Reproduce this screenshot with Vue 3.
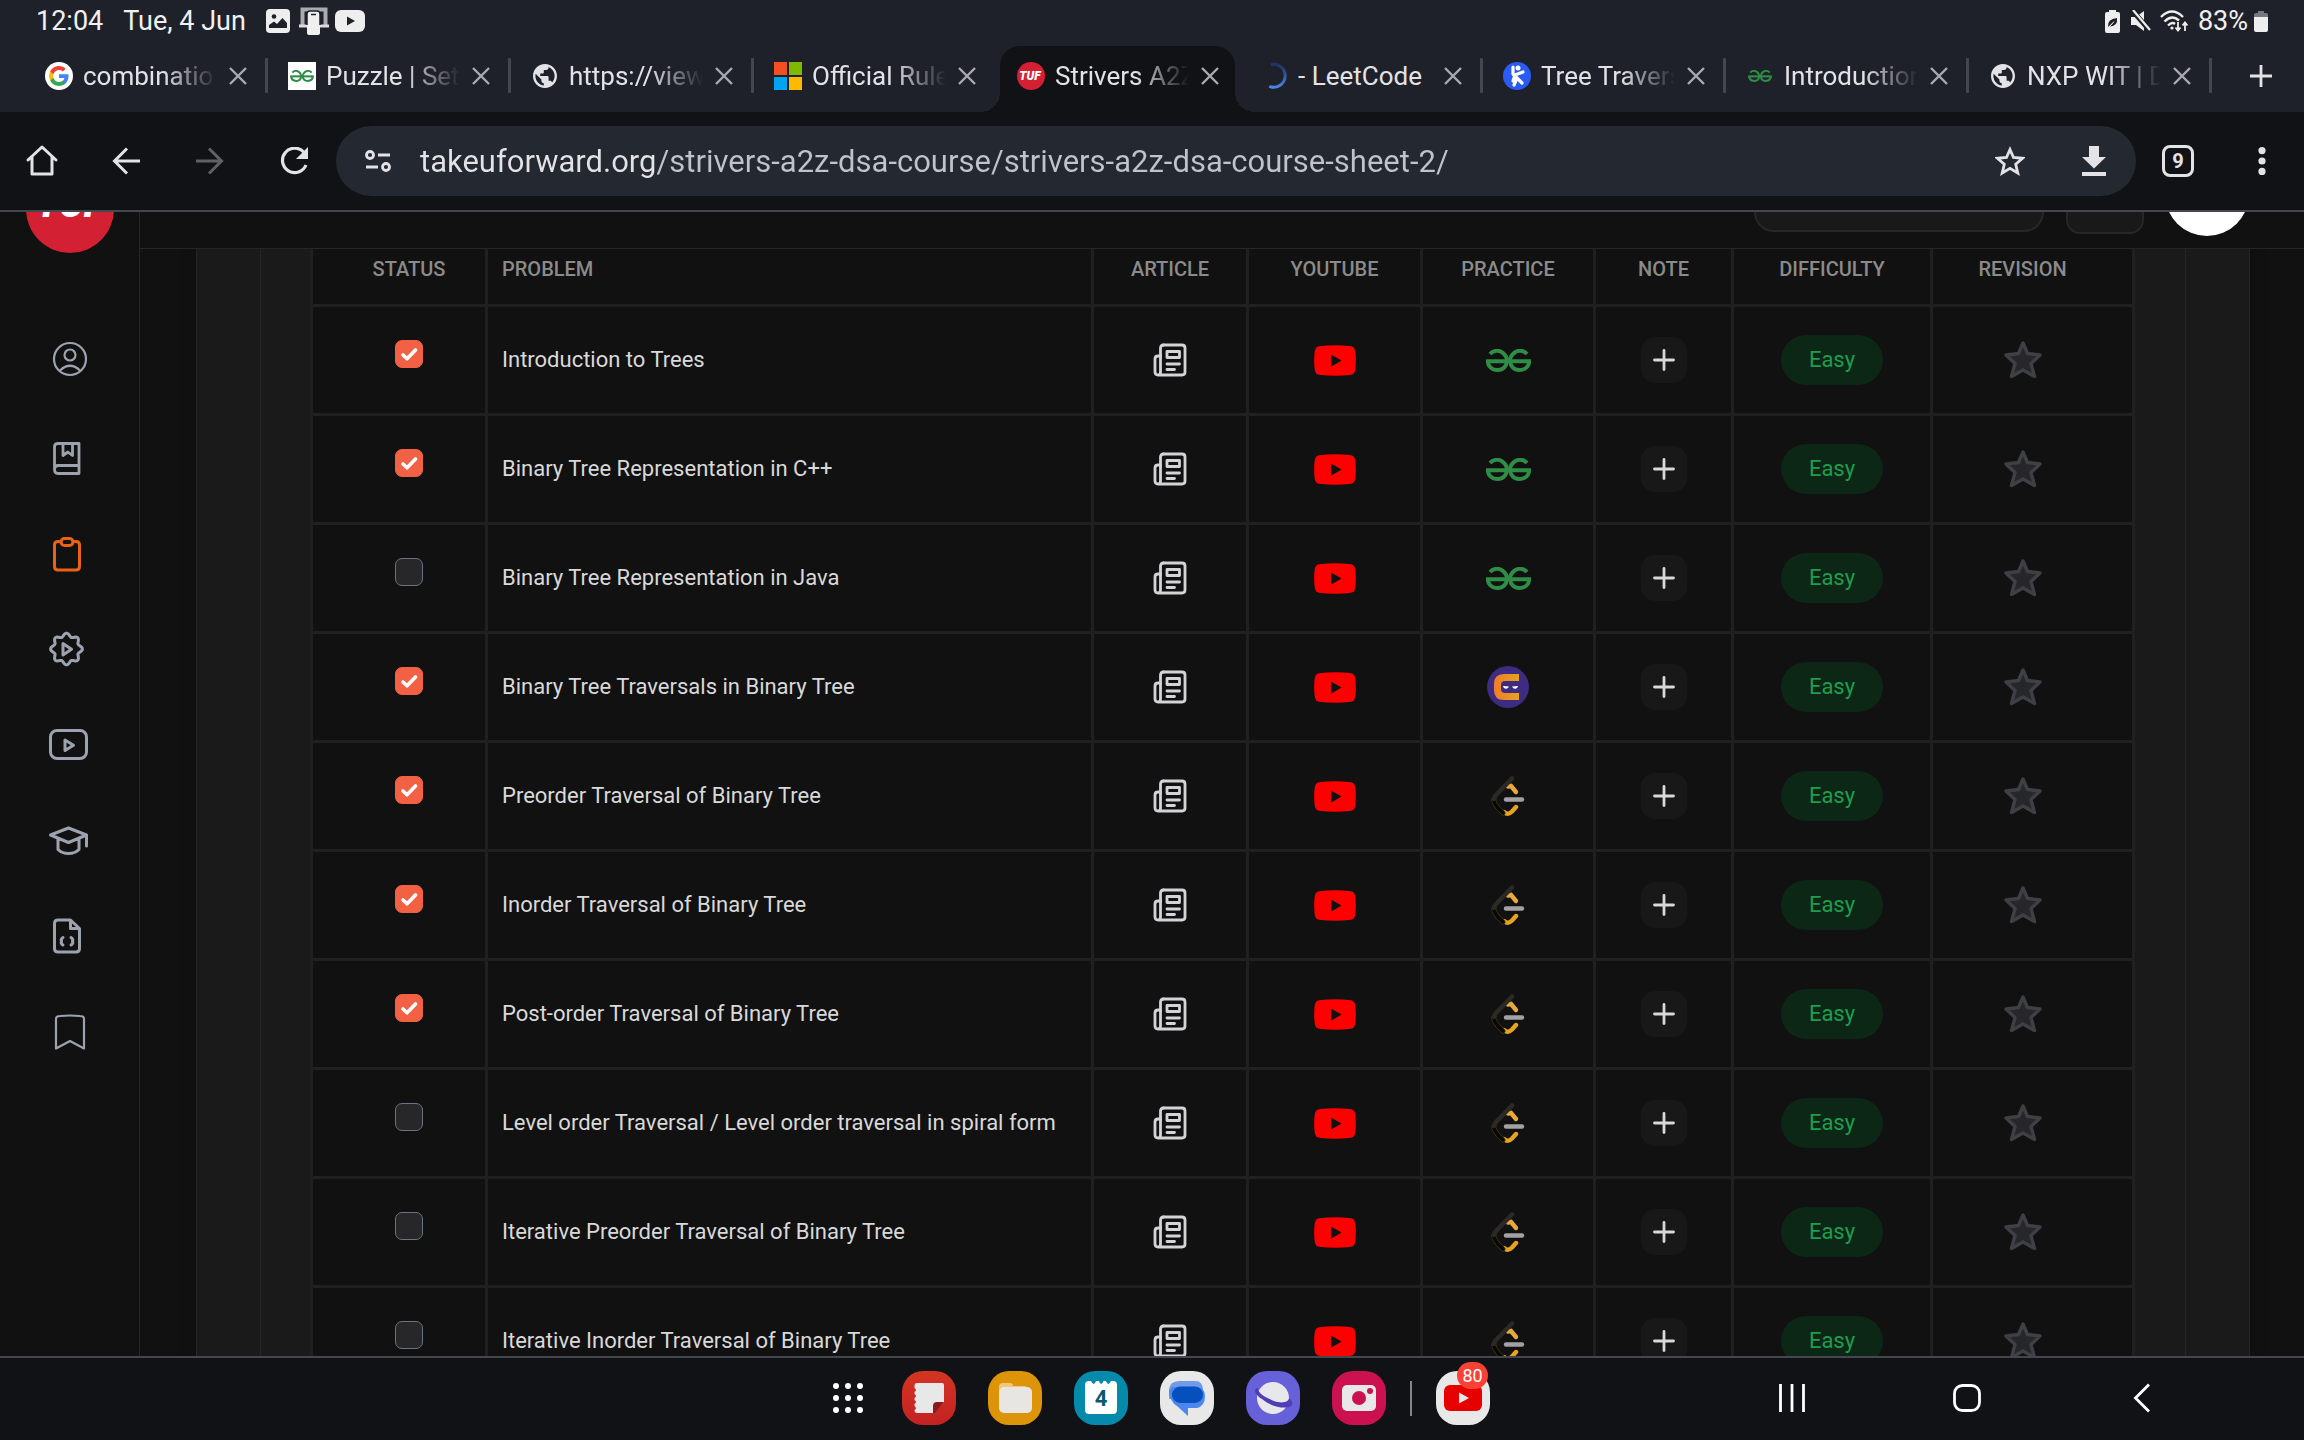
<script setup>
import { ref } from 'vue'

const tabs = [
  { icon: 'google', title: 'combinatio', fade: true, divided: true },
  { icon: 'gfg-box', title: 'Puzzle | Set', fade: true, divided: true },
  { icon: 'globe', title: 'https://view', fade: true, divided: true },
  { icon: 'windows', title: 'Official Rule', fade: true },
  { icon: 'tuf', title: 'Strivers A2Z', fade: true, active: true },
  { icon: 'spinner', title: '- LeetCode', divided: true },
  { icon: 'runner', title: 'Tree Travers', fade: true, divided: true },
  { icon: 'gfg', title: 'Introduction', fade: true, divided: true },
  { icon: 'globe', title: 'NXP WIT | D', fade: true, divided: true }
]

const url = ref('takeuforward.org/strivers-a2z-dsa-course/strivers-a2z-dsa-course-sheet-2/')

const side = [
  { icon: 'user', label: 'Profile' },
  { icon: 'book', label: 'Blogs' },
  { icon: 'clipboard', label: 'Sheets', active: true },
  { icon: 'badge', label: 'Playlists' },
  { icon: 'video', label: 'Videos' },
  { icon: 'cap', label: 'Courses' },
  { icon: 'code', label: 'Core subjects' },
  { icon: 'mark', label: 'Bookmarks' }
]

const columns = [
  { name: 'Status', width: 175 },
  { name: 'Problem', width: 606 },
  { name: 'Article', width: 155 },
  { name: 'YouTube', width: 174 },
  { name: 'Practice', width: 173 },
  { name: 'Note', width: 138 },
  { name: 'Difficulty', width: 199 },
  { name: 'Revision', width: 202 }
]

const problems = ref([
  { title: 'Introduction to Trees', done: true, practice: 'gfg' },
  { title: 'Binary Tree Representation in C++', done: true, practice: 'gfg' },
  { title: 'Binary Tree Representation in Java', done: false, practice: 'gfg' },
  { title: 'Binary Tree Traversals in Binary Tree', done: true, practice: 'ninja' },
  { title: 'Preorder Traversal of Binary Tree', done: true, practice: 'leetcode' },
  { title: 'Inorder Traversal of Binary Tree', done: true, practice: 'leetcode' },
  { title: 'Post-order Traversal of Binary Tree', done: true, practice: 'leetcode' },
  { title: 'Level order Traversal / Level order traversal in spiral form', done: false, practice: 'leetcode' },
  { title: 'Iterative Preorder Traversal of Binary Tree', done: false, practice: 'leetcode' },
  { title: 'Iterative Inorder Traversal of Binary Tree', done: false, practice: 'leetcode' }
])

// Scalloped outline of the playlist badge: a circle with eight soft lobes.
const badgePath = Array.from({ length: 96 }, (_, i) => {
  const a = (i / 96) * Math.PI * 2
  const r = 14.2 + 1.7 * Math.cos(8 * a)
  return `${i ? 'L' : 'M'}${(20.5 + r * Math.cos(a)).toFixed(2)} ${(24 + r * Math.sin(a)).toFixed(2)}`
}).join('') + 'Z'
</script>

<template>
  <div class="device">
    <svg class="defs" aria-hidden="true">
      <symbol id="gfg" viewBox="0 0 45 23">
        <g fill="none" stroke="#2f8d46" stroke-width="4">
          <path d="M0 12.2H45" />
          <path d="M41 5C37.5 1 32 1 28.5 3.6C25.5 6 23.8 9 24 12C24.6 17.5 28 21 33.2 21C39 21 43 17.5 43 12.2" />
          <path d="M4 5C7.5 1 13 1 16.5 3.6C19.5 6 21.2 9 21 12C20.4 17.5 17 21 11.8 21C6 21 2 17.5 2 12.2" />
        </g>
      </symbol>
      <symbol id="ninja" viewBox="0 0 42 42">
        <linearGradient id="ninja-fill"><stop offset="0" stop-color="#f07c2c" /><stop offset="1" stop-color="#e8a21f" /></linearGradient>
        <circle cx="21" cy="21" r="21" fill="#3e2b82" />
        <path d="M32 8V15H18Q14 15 14 19V23Q14 27 18 27H32V34H17Q7 34 7 24V18Q7 8 17 8Z" fill="url(#ninja-fill)" />
        <path d="M16 20L22 20.6Q21 23 18.5 22.8Q16.5 22.5 16 20ZM31 20L25 20.6Q26 23 28.5 22.8Q30.5 22.5 31 20Z" fill="#fff" />
      </symbol>
      <symbol id="leetcode" viewBox="0 0 34 40">
        <g fill="none" stroke-linecap="round">
          <path d="M17 10.5L20 10L25 16" stroke="#e7a93c" stroke-width="4.4" />
          <path d="M13 36C17 39.5 19.5 37 21 35.5L25 31" stroke="#e7a41f" stroke-width="4.4" />
          <path d="M3 23C2 27 5 29 7 32L12 37" stroke="#4a3712" stroke-width="5" />
          <path d="M3 23C2 27 5 29 7 32L12 37" stroke="#070707" stroke-width="3.6" />
          <path d="M21 2.5L5 19C3.5 20.5 3 22 3 23" stroke="#2b2a25" stroke-width="4.6" />
          <path d="M15 23.5H31" stroke="#a3a1a3" stroke-width="4.4" />
        </g>
      </symbol>
      <symbol id="article" viewBox="0 0 34 34">
        <g fill="none" stroke="#d4d4d8" stroke-width="2.8" stroke-linecap="round" stroke-linejoin="round">
          <path d="M10.5 2H29Q32 2 32 5V29Q32 32 29 32H5Q2 32 2 29V16Q2 13 5 13H7.5V29Q7.5 32 5 32" />
          <path d="M7.5 14V5Q7.5 2 10.5 2" />
          <path d="M14 8.5H26.500V14.5H14ZM14 21H26.5M14 26.5H21.5" />
        </g>
      </symbol>
      <symbol id="youtube" viewBox="0 0 42 31">
        <path d="M5 1.3Q21-.6 37 1.3Q40.5 2 41.2 6Q42.5 15.5 41.2 25Q40.5 29 37 29.7Q21 31.6 5 29.7Q1.5 29 .8 25Q-.5 15.5 .8 6Q1.5 2 5 1.3Z" fill="#f00" />
        <path d="M17 9.5V21.7L27.5 15.6Z" fill="#111" />
      </symbol>
      <symbol id="globe" viewBox="2 2 20 20">
        <path fill="#e3e2e6" d="M12 2C6.48 2 2 6.48 2 12s4.48 10 10 10 10-4.48 10-10S17.52 2 12 2zm-1 17.93c-3.95-.49-7-3.85-7-7.93 0-.62.08-1.21.21-1.79L9 15v1c0 1.1.9 2 2 2v1.93zm6.9-2.54c-.26-.81-1-1.39-1.9-1.39h-1v-3c0-.55-.45-1-1-1H8v-2h2c.55 0 1-.45 1-1V7h2c1.1 0 2-.9 2-2v-.41c2.93 1.19 5 4.06 5 7.41 0 2.08-.8 3.97-2.1 5.39z" />
      </symbol>
      <symbol id="google" viewBox="0 0 28 28">
        <circle cx="14" cy="14" r="14" fill="#fff" />
        <g transform="translate(3.2 3.2) scale(.9)">
          <path fill="#4285f4" d="M22.56 12.25c0-.78-.07-1.53-.2-2.25H12v4.26h5.92c-.26 1.37-1.04 2.53-2.21 3.31v2.77h3.57c2.08-1.92 3.28-4.74 3.28-8.09z" />
          <path fill="#34a853" d="M12 23c2.97 0 5.46-.98 7.28-2.66l-3.57-2.77c-.98.66-2.23 1.06-3.71 1.06-2.86 0-5.29-1.93-6.16-4.53H2.18v2.84C3.99 20.53 7.7 23 12 23z" />
          <path fill="#fbbc05" d="M5.84 14.09c-.22-.66-.35-1.36-.35-2.09s.13-1.43.35-2.09V7.07H2.18C1.43 8.55 1 10.22 1 12s.43 3.45 1.18 4.93l2.85-2.22.81-.62z" />
          <path fill="#ea4335" d="M12 5.38c1.62 0 3.06.56 4.21 1.64l3.15-3.15C17.45 2.09 14.97 1 12 1 7.7 1 3.99 3.47 2.18 7.07l3.66 2.84c.87-2.6 3.3-4.53 6.16-4.53z" />
        </g>
      </symbol>
      <symbol id="gfg-box" viewBox="0 0 28 28">
        <path d="M0 0H28V28H0Z" fill="#fff" />
        <use href="#gfg" x="2" y="8" width="24" height="12" />
      </symbol>
      <symbol id="windows" viewBox="0 0 28 28">
        <path d="M0 0H13V13H0Z" fill="#f25022" /><path d="M15 0H28V13H15Z" fill="#7fba00" />
        <path d="M0 15H13V28H0Z" fill="#00a4ef" /><path d="M15 15H28V28H15Z" fill="#ffb900" />
      </symbol>
      <symbol id="spinner" viewBox="0 0 28 28">
        <linearGradient id="spin-fill" x2="0" y2="1"><stop offset="0" stop-color="#1d3361" /><stop offset="1" stop-color="#4a86e8" /></linearGradient>
        <path d="M10 2.8A11.5 11.5 0 1 1 10 24.6" transform="rotate(4 14 14)" fill="none" stroke="url(#spin-fill)" stroke-width="3" />
      </symbol>
      <symbol id="runner" viewBox="0 0 28 28">
        <circle cx="14" cy="14" r="14" fill="#2a5cf5" />
        <circle cx="15" cy="6" r="2.5" fill="#fff" />
        <path d="M10 5V12L14 16L11 23M20 10L12 13L10 19M14 16L19 21" fill="none" stroke="#fff" stroke-width="3.2" stroke-linecap="round" stroke-linejoin="round" />
      </symbol>
    </svg>

    <header class="status">
      <span>12:04</span>
      <span class="date">Tue, 4 Jun</span>
      <svg width="24" height="24" viewBox="0 0 24 24"><rect width="24" height="24" rx="4" fill="#eee" /><circle cx="8" cy="7.5" r="2.3" fill="#1f212a" /><path d="M3 19V16L8 12.5L11 15L16.5 9L21 14V19Z" fill="#1f212a" /></svg>
      <svg class="laptop" width="30" height="28" viewBox="0 0 30 28"><path d="M3.5 18V2.5H26.5V18" fill="none" stroke="#aaabae" stroke-width="4" /><path d="M0 19H30" stroke="#ddd" stroke-width="3" /><rect x="8" y="4" width="13" height="24" rx="2" fill="#f0f0f0" /><path d="M8 18V7Q8 4 11 4H18Q21 4 21 7V18" fill="none" stroke="#1f212a" stroke-width="1.5" /><path d="M12 7.5H17" stroke="#1f212a" stroke-width="1.5" /></svg>
      <svg width="30" height="22" viewBox="0 0 30 22"><rect width="30" height="22" rx="6" fill="#eee" /><path d="M12 6.5V15.5L20 11Z" fill="#1f212a" /></svg>
      <div class="status-right">
        <svg width="15" height="23" viewBox="0 0 15 23"><path d="M4 0H11V2H13Q15 2 15 4V21Q15 23 13 23H2Q0 23 0 21V4Q0 2 2 2H4Z" fill="#eee" /><path d="M3 17Q2 9 12 8Q13 16 5 16.5L9 12" fill="#1f212a" /><path d="M3 18L9 11.5" stroke="#eee" stroke-width="1" /></svg>
        <svg class="mute" width="20" height="22" viewBox="0 0 20 22"><path d="M0 7H5L13 1V21L5 15H0Z" fill="#eee" /><path d="M1 0L19 21" stroke="#1f212a" stroke-width="5" /><path d="M2 0L19 20" stroke="#eee" stroke-width="2.2" /></svg>
        <svg class="wifi" width="28" height="22" viewBox="0 0 28 22"><g fill="none" stroke="#eee" stroke-width="2.4"><path d="M1 7Q12-4 23 7M4.5 11.5Q12 4 19 10.5M8 15.5Q12 11.5 15 14" /><path d="M18 12V20M15.5 17.5L18 20.5L20.5 17.5M25 21V13M22.5 15.5L25 12.5L27.5 15.5" stroke-width="1.8" /></g><circle cx="12" cy="18" r="1.6" fill="#eee" /></svg>
        <span>83%</span>
        <svg class="battery" width="14" height="21" viewBox="0 0 14 21"><path d="M4 0H10V2H12Q14 2 14 4V7H0V4Q0 2 2 2H4Z" fill="#77797f" /><path d="M0 6H14V19Q14 21 12 21H2Q0 21 0 19Z" fill="#eee" /></svg>
      </div>
    </header>

    <nav class="tabs" aria-label="Open tabs">
      <div v-for="tab in tabs" :key="tab.title" class="tab" :class="{ active: tab.active, divided: tab.divided }">
        <button class="tab-main" type="button">
          <svg v-if="tab.icon === 'tuf'" width="28" height="28" viewBox="0 0 28 28"><circle cx="14" cy="14" r="14" fill="#d32032" /><text x="13" y="18" text-anchor="middle" class="tuf-small">TUF</text></svg>
          <svg v-else-if="tab.icon === 'gfg'" width="28" height="28" viewBox="0 0 28 28"><use href="#gfg" x="2" y="8" width="24" height="12" /></svg>
          <svg v-else-if="tab.icon === 'globe'" width="28" height="28" viewBox="-2 -2 28 28"><use href="#globe" width="24" height="24" /></svg>
          <svg v-else width="28" height="28"><use :href="'#' + tab.icon" width="28" height="28" /></svg>
          <span class="tab-title" :class="{ fade: tab.fade }">{{ tab.title }}</span>
        </button>
        <button class="tab-close" type="button" aria-label="Close tab">
          <svg width="18" height="18" viewBox="0 0 18 18"><path d="M1 1L17 17M17 1L1 17" stroke="#a9aab0" stroke-width="2.4" /></svg>
        </button>
      </div>
      <button class="new-tab" type="button" aria-label="New tab">
        <svg width="24" height="24" viewBox="0 0 24 24"><path d="M12 1V23M1 12H23" stroke="#e3e2e6" stroke-width="2.8" /></svg>
      </button>
    </nav>

    <div class="toolbar">
      <button type="button" aria-label="Home"><svg width="34" height="34" viewBox="0 0 34 34"><path d="M3 16L17 3L31 16M7 13V30H27V13" fill="none" stroke="#e3e2e6" stroke-width="3" stroke-linejoin="round" stroke-linecap="round" /></svg></button>
      <button type="button" aria-label="Back"><svg width="28" height="28" viewBox="0 0 28 28"><path d="M15 1.5L2.5 14L15 26.5M3 14H28" fill="none" stroke="#e3e2e6" stroke-width="3" /></svg></button>
      <button type="button" aria-label="Forward"><svg width="28" height="28" viewBox="0 0 28 28"><path d="M13 1.5L25.5 14L13 26.5M25 14H0" fill="none" stroke="#606165" stroke-width="3" /></svg></button>
      <button type="button" aria-label="Reload"><svg width="28" height="28" viewBox="0 0 28 28"><path d="M24 5.5A12.2 12.2 0 1 0 26 18" fill="none" stroke="#e3e2e6" stroke-width="3.2" /><path d="M28 0V12H16Z" fill="#e3e2e6" /></svg></button>
      <form class="omnibox" @submit.prevent>
        <button type="button" aria-label="Site settings"><svg width="26" height="22" viewBox="0 0 26 22"><g fill="none" stroke="#e3e2e6" stroke-width="2.8"><circle cx="5" cy="5" r="3.5" /><path d="M13 5H25M1 17H13" /><circle cx="21" cy="17" r="3.5" /></g></svg></button>
        <input v-model="url" type="text" aria-label="Address" />
        <button type="button" aria-label="Bookmark this page"><svg width="30" height="30" viewBox="0 0 30 30"><path d="M15 3.5L18.500 11.5L27.5 12.3L20.7 18.2L22.8 27L15 22.3L7.2 27L9.3 18.2L2.5 12.3L11.5 11.5Z" fill="none" stroke="#e3e2e6" stroke-width="2.8" /></svg></button>
        <button type="button" aria-label="Download page"><svg width="26" height="30" viewBox="0 0 26 30"><path d="M8 0H18V11H25L13 22.5L1 11H8ZM1 26H25V30H1Z" fill="#e3e2e6" /></svg></button>
      </form>
      <button type="button" class="count" aria-label="Switch tabs"><span>9</span></button>
      <button type="button" aria-label="Menu"><svg width="8" height="28" viewBox="0 0 8 28"><circle cx="4" cy="3.6" r="3.6" fill="#e3e2e6" /><circle cx="4" cy="14" r="3.6" fill="#e3e2e6" /><circle cx="4" cy="24.4" r="3.6" fill="#e3e2e6" /></svg></button>
    </div>

    <div class="page">
      <aside class="sidebar">
        <a class="logo" href="#" aria-label="Home page">TUF</a>
        <nav class="side-nav">
          <a v-for="s in side" :key="s.icon" href="#" :aria-label="s.label" :class="{ active: s.active }">
            <svg width="48" height="48" viewBox="0 0 48 48" fill="none" stroke="currentColor" stroke-width="3" stroke-linecap="round" stroke-linejoin="round">
              <g v-if="s.icon === 'user'" stroke-width="2.2"><circle cx="24" cy="24" r="16" /><circle cx="24" cy="20" r="5.5" /><path d="M14 35.5Q24 26 34 35.5" /></g>
              <g v-else-if="s.icon === 'book'" stroke-width="2.8"><path d="M8.5 34.5V12Q8.5 8.500 12 8.5H33V38.5H12Q8.5 38.5 8.5 34.5Q8.5 30.5 12 30.5H32" /><path d="M17 9V20.5L21.8 17L26.5 20.5V9" /></g>
              <g v-else-if="s.icon === 'clipboard'"><path d="M15 11.5H12Q8.5 11.5 8.5 15V36.5Q8.5 40 12 40H30Q33.5 40 33.5 36.5V15Q33.5 11.5 30 11.5H27" /><rect x="15" y="8.5" width="12" height="7" rx="3.5" /></g>
              <g v-else-if="s.icon === 'badge'"><path :d="badgePath" /><path d="M17 18.5V30L25.5 24.2Z" /></g>
              <g v-else-if="s.icon === 'video'"><rect x="4.5" y="10.5" width="36" height="28" rx="6.5" /><path d="M19 20V30.5L27.5 25.2Z" /></g>
              <g v-else-if="s.icon === 'cap'"><path d="M4.5 20L22.5 13L40.5 20L22.5 27.5ZM40.5 20V31M12 24V34.5Q16 38.5 22.5 38.5Q29 38.5 33 34.5V24" /></g>
              <g v-else-if="s.icon === 'code'"><path d="M24.5 10H12Q8.5 10 8.5 13.5V38.5Q8.5 42 12 42H30Q33.5 42 33.5 38.5V18.5ZM24.5 10V18.5H33.5" /><path d="M17 27.5Q14.5 29 15.5 31.3Q14.5 33.5 17 35M25 27.5Q27.5 29 26.5 31.3Q27.5 33.5 25 35" /></g>
              <g v-else stroke-width="2.2"><path d="M10 43.5V14Q10 11 14 11Q24 10 34 11Q38 11 38 14V43.5L24 36Z" /></g>
            </svg>
          </a>
        </nav>
      </aside>

      <div class="main">
        <div class="site-bar">
          <button class="search" type="button" aria-label="Search"></button>
          <button class="theme" type="button" aria-label="Theme"></button>
          <button class="avatar" type="button" aria-label="Account"></button>
        </div>
        <main class="scroll">
          <section class="outer">
            <div class="inner">
              <table>
                <colgroup><col v-for="c in columns" :key="c.name" :style="{ width: c.width + 'px' }" /></colgroup>
                <thead>
                  <tr><th v-for="c in columns" :key="c.name" :class="'c-' + c.name.toLowerCase()" scope="col">{{ c.name }}</th></tr>
                </thead>
                <tbody>
                  <tr v-for="(p, i) in problems" :key="p.title">
                    <td class="c-status"><span class="check"><input :id="'p' + i" v-model="p.done" type="checkbox" /><svg v-if="p.done" width="28" height="28" viewBox="0 0 28 28"><path d="M8 15L12 18.8L20.5 10" fill="none" stroke="#fff" stroke-width="3.6" stroke-linecap="round" stroke-linejoin="round" /></svg></span></td>
                    <td class="c-problem"><label :for="'p' + i">{{ p.title }}</label></td>
                    <td><a href="#" aria-label="Article"><svg width="34" height="34"><use href="#article" /></svg></a></td>
                    <td><a href="#" aria-label="YouTube video"><svg width="42" height="31"><use href="#youtube" /></svg></a></td>
                    <td>
                      <a href="#" aria-label="Practice">
                        <svg v-if="p.practice === 'gfg'" width="45" height="23"><use href="#gfg" /></svg>
                        <svg v-else-if="p.practice === 'ninja'" width="42" height="42"><use href="#ninja" /></svg>
                        <svg v-else width="34" height="40"><use href="#leetcode" /></svg>
                      </a>
                    </td>
                    <td><button class="note" type="button" aria-label="Add note"><svg width="22" height="22" viewBox="0 0 22 22"><path d="M11 1.5V20.5M1.5 11H20.5" stroke="#d8d8da" stroke-width="2.8" stroke-linecap="round" /></svg></button></td>
                    <td><span class="easy">Easy</span></td>
                    <td class="c-revision"><button class="star" type="button" aria-label="Mark for revision"><svg width="40" height="40" viewBox="0 0 40 40"><path d="M20 3L24.5 13.5L37 15L28 23.5L31.5 36.5L20 30L8.5 36.5L12 23.5L3 15L15.5 13.5Z" fill="#27272a" stroke="#3f3f46" stroke-width="3.4" stroke-linejoin="round" /></svg></button></td>
                  </tr>
                </tbody>
              </table>
            </div>
          </section>
        </main>
      </div>
    </div>

    <footer class="dock">
      <div class="apps">
        <button class="all-apps" type="button" aria-label="All apps"><svg width="30" height="30" viewBox="0 0 30 30" fill="#fff"><g v-for="y in 3" :key="y"><circle v-for="x in 3" :key="x" :cx="x * 12 - 9" :cy="y * 12 - 9" r="3" /></g></svg></button>
        <button type="button" aria-label="Notes"><svg width="54" height="54" viewBox="0 0 54 54"><linearGradient id="notes" x2="0" y2="1"><stop offset="0" stop-color="#d43522" /><stop offset="1" stop-color="#c32222" /></linearGradient><rect width="54" height="54" rx="21" fill="url(#notes)" /><path d="M15 12H40Q42 12 42 14V31L32 42H15Q12.5 42 12.5 39Q15.5 37.5 12.5 35V33Q15.5 31 12.5 29V27Q15.5 25 12.5 23V21Q15.5 19 12.5 17V15Q12.5 12 15 12Z" fill="#e8e8e8" /><path d="M42 31H35Q31 31 31 35V42H33Z" fill="#8c1c1c" /></svg></button>
        <button type="button" aria-label="Files"><svg width="54" height="54" viewBox="0 0 54 54"><rect width="54" height="54" rx="21" fill="#de9408" /><path d="M11 16Q11 12 15 12H22Q25 12 25 15H36Q40 15 40 20H11Z" fill="#efc878" /><rect x="11" y="16" width="33" height="26" rx="5" fill="#e8e6e3" /></svg></button>
        <button type="button" aria-label="Calendar"><svg width="54" height="54" viewBox="0 0 54 54"><rect width="54" height="54" rx="21" fill="#058aab" /><path d="M11 14Q11 10 15 10H17Q20 16 22 10H25Q27 16 29.5 10H32Q34 16 37 10H39Q43 10 43 14V39Q43 43 39 43H15Q11 43 11 39Z" fill="#fff" /><text x="27" y="35" text-anchor="middle" class="date-num">4</text></svg></button>
        <button type="button" aria-label="Messages"><svg width="54" height="54" viewBox="0 0 54 54"><rect width="54" height="54" rx="21" fill="#e8e8e8" /><path d="M20 10H35Q43 10 43 19V28H9V20Q9 10 20 10Z" fill="#6f9bea" /><path d="M12 16H36Q45 16 45 25Q45 35 37 37H28V45L17 35Q10 31 9 20Z" fill="#4c86ee" /><rect x="12" y="15.5" width="31" height="16.5" rx="8.25" fill="#0550bd" /></svg></button>
        <button type="button" aria-label="Internet"><svg width="54" height="54" viewBox="0 0 54 54"><rect width="54" height="54" rx="21" fill="#6761d9" /><circle cx="27" cy="27" r="16" fill="#e8e8ea" /><path d="M12 17C7 17 8 23 16 28C24 35 36 38 43 36C48 35 47 30 43 27C43 31 36 33 28 30C19 26 12 23 12 17Z" fill="#4d3fb5" /></svg></button>
        <button type="button" aria-label="Camera"><svg width="54" height="54" viewBox="0 0 54 54"><rect width="54" height="54" rx="21" fill="#cb114f" /><rect x="10" y="14" width="34" height="26" rx="5" fill="#e8e8e8" /><circle cx="27" cy="27" r="7" fill="#cb114f" /><circle cx="38" cy="20" r="3" fill="#cb114f" /></svg></button>
        <span class="sep"></span>
        <button type="button" class="yt" aria-label="YouTube"><svg width="54" height="54" viewBox="0 0 54 54"><rect width="54" height="54" rx="21" fill="#e8e8e8" /><rect x="8" y="14" width="38" height="26" rx="6" fill="#e60000" /><path d="M23 21.5V32.5L33 27Z" fill="#e8e8e8" /></svg><span class="badge">80</span></button>
      </div>
      <div class="keys">
        <button type="button" aria-label="Recents"><svg width="26" height="28" viewBox="0 0 26 28"><path d="M1.5 0V28M13 0V28M24.5 0V28" stroke="#fff" stroke-width="2.8" /></svg></button>
        <button type="button" aria-label="Home screen"><svg width="30" height="30" viewBox="0 0 30 30"><rect x="2.5" y="2.5" width="25" height="25" rx="8" fill="none" stroke="#fff" stroke-width="2.8" /></svg></button>
        <button type="button" aria-label="Go back"><svg width="18" height="30" viewBox="0 0 18 30"><path d="M16 1.5L2.5 15L16 28.5" fill="none" stroke="#fff" stroke-width="2.8" /></svg></button>
      </div>
    </footer>
  </div>
</template>

<style>
body { background: #111; }
</style>

<style scoped>
* { box-sizing: border-box; }
.device { display: flex; flex-direction: column; height: 100vh; overflow: hidden; background: #111; color: #e3e2e6; font-family: Roboto, sans-serif; }
.defs { position: absolute; width: 0; height: 0; }
button { display: grid; place-items: center; margin: 0; padding: 0; border: 0; background: none; color: inherit; font: inherit; }
svg { display: block; flex: none; }
a { color: inherit; text-decoration: none; }

.status { display: flex; align-items: center; height: 46px; padding: 0 36px 4px; background: #1f212a; color: #f0f0f0; font-size: 27px; line-height: 30px; }
.date { margin: 0 20px; }
.laptop { margin: 0 6px 0 9px; }
.status-right { display: flex; align-items: center; margin-left: auto; }
.mute { margin: 0 9px 0 11px; }
.wifi { margin-right: 10px; }
.battery { margin-left: 6px; }

.tabs { display: flex; height: 66px; padding-left: 24px; background: #1f212a; }
.tab { position: relative; display: flex; align-items: center; flex: 0 1 243px; min-width: 0; padding: 0 20px 6px 21px; }
.tab.divided::after { content: ''; position: absolute; right: -1px; top: 12px; width: 3px; height: 35px; background: #45474f; border-radius: 1px; }
.tab-main { display: flex; align-items: center; flex: 1; min-width: 0; gap: 10px; }
.tab-title { flex: 1; min-width: 0; overflow: hidden; white-space: nowrap; text-align: left; font-size: 26px; line-height: 36px; }
.tab-title.fade { mask-image: linear-gradient(to right, #000 60%, transparent); }
.tab-close { width: 18px; margin-left: 12px; }
.tab.active { flex-basis: 235px; margin: 0 4px; padding: 0 16px 6px 17px; border-radius: 20px 20px 0 0; background: #111216; }
.tab.active::before, .tab.active::after { content: ''; position: absolute; bottom: 0; width: 20px; height: 20px; }
.tab.active::before { left: -20px; background: radial-gradient(circle at 0 0, transparent 20px, #111216 20px); }
.tab.active::after { right: -20px; background: radial-gradient(circle at 100% 0, transparent 20px, #111216 20px); }
.new-tab { flex: 1; padding: 0 0 6px 6px; }
.tuf-small { fill: #fff; font: italic 900 12px Roboto, sans-serif; }

.toolbar { display: flex; height: 100px; padding: 14px 0; background: #111216; border-bottom: 2px solid #45474f; }
.toolbar button { flex: none; width: 84px; }
.omnibox { display: flex; flex: 1; min-width: 0; border-radius: 35px; background: #242830; }
.omnibox input { flex: 1; min-width: 0; padding: 2px 0 0; border: 0; outline: 0; background: linear-gradient(to right, #e3e2e6 238px, #c1c3cc 238px); background-clip: text; color: transparent; font: 31px/40px Roboto, sans-serif; }
.count span { display: grid; place-items: center; width: 32px; height: 32px; border: 3px solid #e3e2e6; border-radius: 8px; font-size: 20px; font-weight: 700; line-height: 24px; }

.page { display: flex; flex: 1; min-height: 0; overflow: hidden; }
.sidebar { flex: none; width: 140px; border-right: 1px solid #26262a; }
.logo { display: grid; place-items: center; width: 88px; height: 88px; margin: -47px 0 82px 26px; padding-bottom: 10px; border-radius: 50%; background: #d32032; color: #fff; font: italic 900 38px/40px Roboto, sans-serif; }
.side-nav { display: flex; flex-direction: column; gap: 47px; padding-left: 46px; color: #9ca3af; }
.side-nav a:first-child { margin-bottom: 5px; }
.side-nav a.active { color: #ea6214; }

.main { display: flex; flex: 1; flex-direction: column; min-width: 0; }
.site-bar { display: flex; align-items: flex-start; flex: none; justify-content: flex-end; height: 37px; padding-right: 55px; border-bottom: 1px solid #262626; overflow: hidden; }
.search { width: 290px; height: 60px; margin: -40px 22px 0 0; border: 2px solid #27272a; border-radius: 20px; background: #191919; }
.theme { width: 78px; height: 62px; margin: -40px 21px 0 0; border: 2px solid #27272a; border-radius: 14px; background: #191919; }
.avatar { width: 84px; height: 84px; margin-top: -60px; border-radius: 50%; background: #fff; }
.scroll { flex: 1; min-height: 0; overflow: hidden; padding: 0 54px 0 56px; }
.outer { padding: 0 63px; border: solid #25252a; border-width: 0 1px; background: #1a1a1a; box-shadow: 0 0 12px #0e0e10; }
.inner { padding: 0 50px 0 49px; border: solid #25252a; border-width: 0 1px; }

table { width: 100%; margin-top: -17px; border-collapse: collapse; table-layout: fixed; background: #111; }
th, td { padding: 0; border: 3px solid #202020; text-align: center; vertical-align: middle; }
th { height: 72px; padding-bottom: 2px; color: #8b8b8b; font-size: 20px; font-weight: 500; line-height: 24px; text-transform: uppercase; }
td { height: 109px; color: #d9d9d9; font-size: 22px; line-height: 28px; }
td > a, td > button { display: grid; place-items: center; }
.c-status { padding-left: 20px; }
.c-problem { padding-left: 14px; text-align: left; }
.c-revision { padding-right: 20px; }
.check { position: relative; display: block; width: 28px; height: 28px; margin: 0 auto 12px; }
.check input { appearance: none; display: block; width: 28px; height: 28px; margin: 0; border: 1px solid #6b7280; border-radius: 7px; background: #27272a; }
.check input:checked { border-color: #f36144; background: #f36144; }
.check svg { position: absolute; inset: 0; pointer-events: none; }
.note { width: 46px; height: 46px; margin: 0 auto; border-radius: 14px; background: #181818; }
.star { margin: 0 auto; }
.easy { display: inline-block; padding: 11px 28px; border-radius: 25px; background: #0c2716; color: #1f9d4d; }

.dock { display: grid; grid-template-columns: 1fr auto 1fr; align-items: center; flex: none; height: 84px; padding-bottom: 2px; border-top: 2px solid #45474f; background: #111216; }
.apps { display: flex; align-items: center; grid-column: 2; gap: 32px; padding-left: 12px; }
.all-apps { width: 44px; }
.sep { width: 2px; height: 35px; margin: 0 -8px; background: #85868a; }
.yt { position: relative; }
.badge { position: absolute; top: -9px; right: 2px; min-width: 31px; height: 27px; border-radius: 14px; background: #fb4136; color: #fff; font-size: 18px; line-height: 27px; text-align: center; }
.date-num { fill: #075b70; font: 700 22px Roboto, sans-serif; }
.keys { display: flex; justify-content: flex-end; gap: 127px; padding-right: 138px; }
.keys button { width: 48px; }
</style>
